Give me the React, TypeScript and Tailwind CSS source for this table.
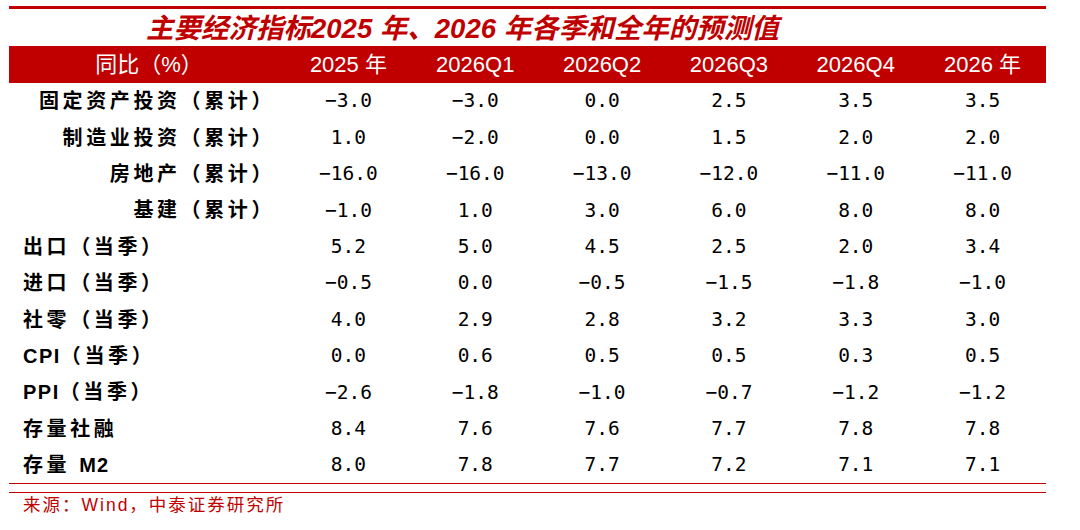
const HEADERS = ['2025 年', '2026Q1', '2026Q2', '2026Q3', '2026Q4', '2026 年'];

// 主要经济指标预测
const ROWS = [
  { label: '固定资产投资（累计）', indent: true, values: ['−3.0', '−3.0', '0.0', '2.5', '3.5', '3.5'] },
  { label: '制造业投资（累计）', indent: true, values: ['1.0', '−2.0', '0.0', '1.5', '2.0', '2.0'] },
  { label: '房地产（累计）', indent: true, values: ['−16.0', '−16.0', '−13.0', '−12.0', '−11.0', '−11.0'] },
  { label: '基建（累计）', indent: true, values: ['−1.0', '1.0', '3.0', '6.0', '8.0', '8.0'] },
  { label: '出口（当季）', values: ['5.2', '5.0', '4.5', '2.5', '2.0', '3.4'] },
  { label: '进口（当季）', values: ['−0.5', '0.0', '−0.5', '−1.5', '−1.8', '−1.0'] },
  { label: '社零（当季）', values: ['4.0', '2.9', '2.8', '3.2', '3.3', '3.0'] },
  { latin: 'CPI', label: '（当季）', values: ['0.0', '0.6', '0.5', '0.5', '0.3', '0.5'] },
  { latin: 'PPI', label: '（当季）', values: ['−2.6', '−1.8', '−1.0', '−0.7', '−1.2', '−1.2'] },
  { label: '存量社融', values: ['8.4', '7.6', '7.6', '7.7', '7.8', '7.8'] },
  { label: '存量 ', latinAfter: 'M2', values: ['8.0', '7.8', '7.7', '7.2', '7.1', '7.1'] },
];

const labelFont = "text-[20px] tracking-[3.6px] font-bold [font-family:'Liberation_Sans','Noto_Sans_CJK_SC',sans-serif] leading-none whitespace-nowrap";

export default function App() {
  return (
    <div className="w-[1080px] h-[530px] bg-white pt-[6px] pl-[9px] overflow-hidden">
      <div className="w-[1037px]">
        <div className="h-[3px] bg-[#c00000]" />

        {/* Title */}
        <div className="h-[37px] flex items-center pt-[2px] pl-[137px] text-[27.5px] font-bold italic text-[#c00000] [font-family:'Liberation_Sans','Noto_Sans_CJK_SC',sans-serif] leading-none whitespace-nowrap">
          主要经济指标2025 年、2026 年各季和全年的预测值
        </div>

        {/* Header */}
        <div className="h-[37px] bg-[#c00000] grid grid-cols-[276px_repeat(6,1fr)] items-center text-white text-[22px] [font-family:'Liberation_Sans','Noto_Sans_CJK_SC',sans-serif] leading-none">
          <div className="text-center pl-[4px]">同比（%）</div>
          {HEADERS.map((h) => (
            <div key={h} className="text-center">{h}</div>
          ))}
        </div>

        {/* Body */}
        {ROWS.map((row, r) => (
          <div key={r} className="h-[36.4px] grid grid-cols-[276px_repeat(6,1fr)] items-center text-black">
            <div className={row.indent ? `text-right pr-[10px] ${labelFont}` : `text-left pl-[14px] ${labelFont}`}>
              {row.latin && <span className="tracking-[1.5px]">{row.latin}</span>}
              {row.label}
              {row.latinAfter && <span className="tracking-[1px]">{row.latinAfter}</span>}
            </div>
            {row.values.map((v, i) => (
              <div key={i} className="text-center text-[19.5px] [font-family:'DejaVu_Sans_Mono',monospace] leading-none">
                {v}
              </div>
            ))}
          </div>
        ))}

        {/* Footer lines */}
        <div className="h-px bg-[#c00000]" />
        <div className="h-[8px]" />
        <div className="h-px bg-[#c00000]" />

        <div className="h-[25px] flex items-center pl-[14px] text-[17.5px] tracking-[2px] text-[#c00000] [font-family:'Liberation_Sans','Noto_Sans_CJK_SC',sans-serif] leading-none">
          来源：Wind，中泰证券研究所
        </div>
      </div>
    </div>
  );
}
